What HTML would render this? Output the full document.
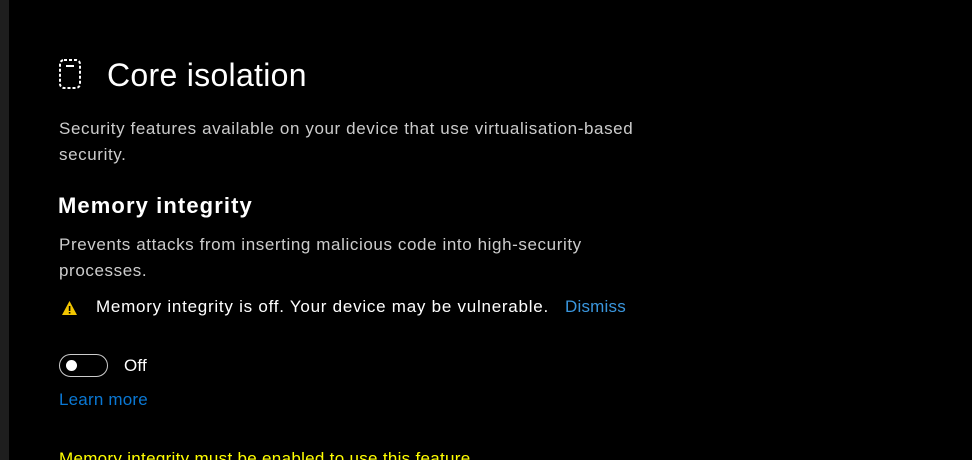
<!DOCTYPE html>
<html style="overflow:hidden"><head><style>
html,body{margin:0;width:972px;height:460px;overflow:hidden}
body{background:#000;position:relative;font-family:"Liberation Sans",sans-serif}
.bar{position:absolute;left:0;top:0;width:9px;height:460px;background:#1e1e1e}
.t{position:absolute;white-space:nowrap}
.b{font-size:17px;letter-spacing:0.6px}
</style></head><body>
<div class="bar"></div>
<svg style="position:absolute;left:58px;top:58px" width="26" height="34" viewBox="0 0 26 34">
<rect x="2" y="2" width="20" height="28" rx="4" fill="none" stroke="#fff" stroke-width="2" stroke-dasharray="3 2"/>
<line x1="8" y1="8" x2="16" y2="8" stroke="#fff" stroke-width="2"/>
</svg>
<div class="t" style="left:107px;top:57px;font-size:32px;color:#fff;letter-spacing:0.3px">Core isolation</div>
<div class="t b" style="left:59px;top:116px;line-height:26px;color:#ccc">Security features available on your device that use virtualisation-based<br>security.</div>
<div class="t" style="left:58px;top:193px;font-size:22px;font-weight:bold;color:#fff;letter-spacing:1.1px">Memory integrity</div>
<div class="t b" style="left:59px;top:232px;line-height:26px;color:#ccc">Prevents attacks from inserting malicious code into high-security<br>processes.</div>
<svg style="position:absolute;left:61px;top:300px" width="17" height="16" viewBox="0 0 17 16"><path d="M8.5 1L16 15H1Z" fill="#f2c500"/><rect x="7.8" y="6" width="1.6" height="5" fill="#000"/><rect x="7.8" y="12" width="1.6" height="1.6" fill="#000"/></svg>
<div class="t b" style="left:96px;top:297px;color:#fff;letter-spacing:0.75px">Memory integrity is off. Your device may be vulnerable.</div>
<div class="t b" style="left:565px;top:297px;color:#3a96dd;letter-spacing:0.2px">Dismiss</div>
<div style="position:absolute;left:59px;top:354px;width:47px;height:21px;border:1.5px solid #ccc;border-radius:12px"></div>
<div style="position:absolute;left:66px;top:360px;width:11px;height:11px;border-radius:50%;background:#fff"></div>
<div class="t b" style="left:124px;top:356px;color:#fff;letter-spacing:0.2px">Off</div>
<div class="t b" style="left:59px;top:390px;color:#0a78d4;letter-spacing:0.2px">Learn more</div>
<div class="t b" style="left:59px;top:449px;color:#ffff00;letter-spacing:0.3px">Memory integrity must be enabled to use this feature.</div>
</body></html>
